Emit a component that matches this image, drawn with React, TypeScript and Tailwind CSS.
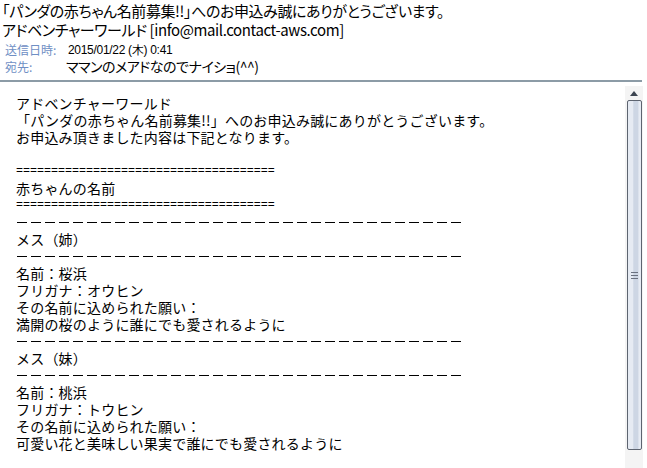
const body: { t: string; kind?: "eq" | "dash" | "gap" }[] = [
  { t: "アドベンチャーワールド" },
  { t: "「パンダの赤ちゃん名前募集!!」へのお申込み誠にありがとうございます。" },
  { t: "お申込み頂きました内容は下記となります。" },
  { t: "", kind: "gap" },
  { t: "", kind: "eq" },
  { t: "赤ちゃんの名前" },
  { t: "", kind: "eq" },
  { t: "", kind: "dash" },
  { t: "メス（姉）" },
  { t: "", kind: "dash" },
  { t: "名前：桜浜" },
  { t: "フリガナ：オウヒン" },
  { t: "その名前に込められた願い：" },
  { t: "満開の桜のように誰にでも愛されるように" },
  { t: "", kind: "dash" },
  { t: "メス（妹）" },
  { t: "", kind: "dash" },
  { t: "名前：桃浜" },
  { t: "フリガナ：トウヒン" },
  { t: "その名前に込められた願い：" },
  { t: "可愛い花と美味しい果実で誰にでも愛されるように" },
];

function Line({ t, kind }: { t: string; kind?: "eq" | "dash" | "gap" }) {
  if (kind === "eq")
    return (
      <div className="h-[17px] font-['Liberation_Mono',monospace] text-[11.67px] leading-[17px] tracking-normal">
        {"=".repeat(37)}
      </div>
    );
  if (kind === "dash")
    return (
      <div className="flex h-[17px] items-center gap-[4px] pl-[1px]">
        {Array.from({ length: 32 }).map((_, i) => (
          <span key={i} className="h-[1px] w-[10px] bg-black" />
        ))}
      </div>
    );
  if (kind === "gap") return <div className="h-[17px]" />;
  return <div className="h-[17px] whitespace-nowrap leading-[17px]">{t}</div>;
}

export default function App() {
  return (
    <div className="flex h-[468px] w-[647px] flex-col overflow-hidden bg-white font-['Noto_Sans_CJK_JP',sans-serif] text-black">
      <div className="h-[80px] px-[2px] pt-[1px]">
        <div className="text-[15px] leading-[19px] tracking-[-0.4px] [font-feature-settings:'palt']">
          「パンダの赤ちゃん名前募集!!」へのお申込み誠にありがとうございます。
        </div>
        <div className="text-[15px] leading-[19px] tracking-[-0.4px] [font-feature-settings:'palt']">
          アドベンチャーワールド [info@mail.contact-aws.com]
        </div>
        <div className="mt-[3px] flex items-center text-[12px] leading-[16px]">
          <span className="w-[66px] pl-[3px] text-[#6f8fc4]">送信日時:</span>
          <span className="font-['Liberation_Sans_Narrow','Liberation_Sans',sans-serif] tracking-[-0.3px]">
            2015/01/22 (木) 0:41
          </span>
        </div>
        <div className="flex items-center leading-[17px]">
          <span className="w-[64px] pl-[3px] text-[12px] text-[#6f8fc4]">宛先:</span>
          <span className="text-[14px] tracking-[-0.5px] [font-feature-settings:'palt']">
            ママンのメアドなのでナイショ(^^)
          </span>
        </div>
      </div>
      <div className="mr-[5px] h-[2px] bg-[#8c9ba6]" />
      <div className="flex min-h-0 flex-1">
        <div className="flex-1 pl-[16px] pt-[13px] text-[14px] tracking-[0.2px]">
          {body.map((l, i) => (
            <Line key={i} t={l.t} kind={l.kind} />
          ))}
        </div>
        <div className="mr-[4px] mt-[4px] flex w-[18px] flex-col items-center bg-[#f4f4f4]">
          <div className="flex h-[14px] w-full items-center justify-center">
            <svg width="8" height="5" viewBox="0 0 8 5">
              <path d="M0 5 L4 0 L8 5 Z" fill="#3c4450" />
            </svg>
          </div>
          <div className="relative flex h-[350px] w-[15px] items-center justify-center rounded-[2px] border border-[#5d6470] bg-[linear-gradient(to_right,#e6ebf3_0%,#e6ebf3_35%,#cdd6e4_45%,#cdd6e4_75%,#e6ebf3_85%)]">
            <div className="flex flex-col gap-[2px]">
              <span className="h-[1px] w-[7px] bg-[#6b7280]" />
              <span className="h-[1px] w-[7px] bg-[#6b7280]" />
              <span className="h-[1px] w-[7px] bg-[#6b7280]" />
            </div>
          </div>
        </div>
      </div>
    </div>
  );
}
